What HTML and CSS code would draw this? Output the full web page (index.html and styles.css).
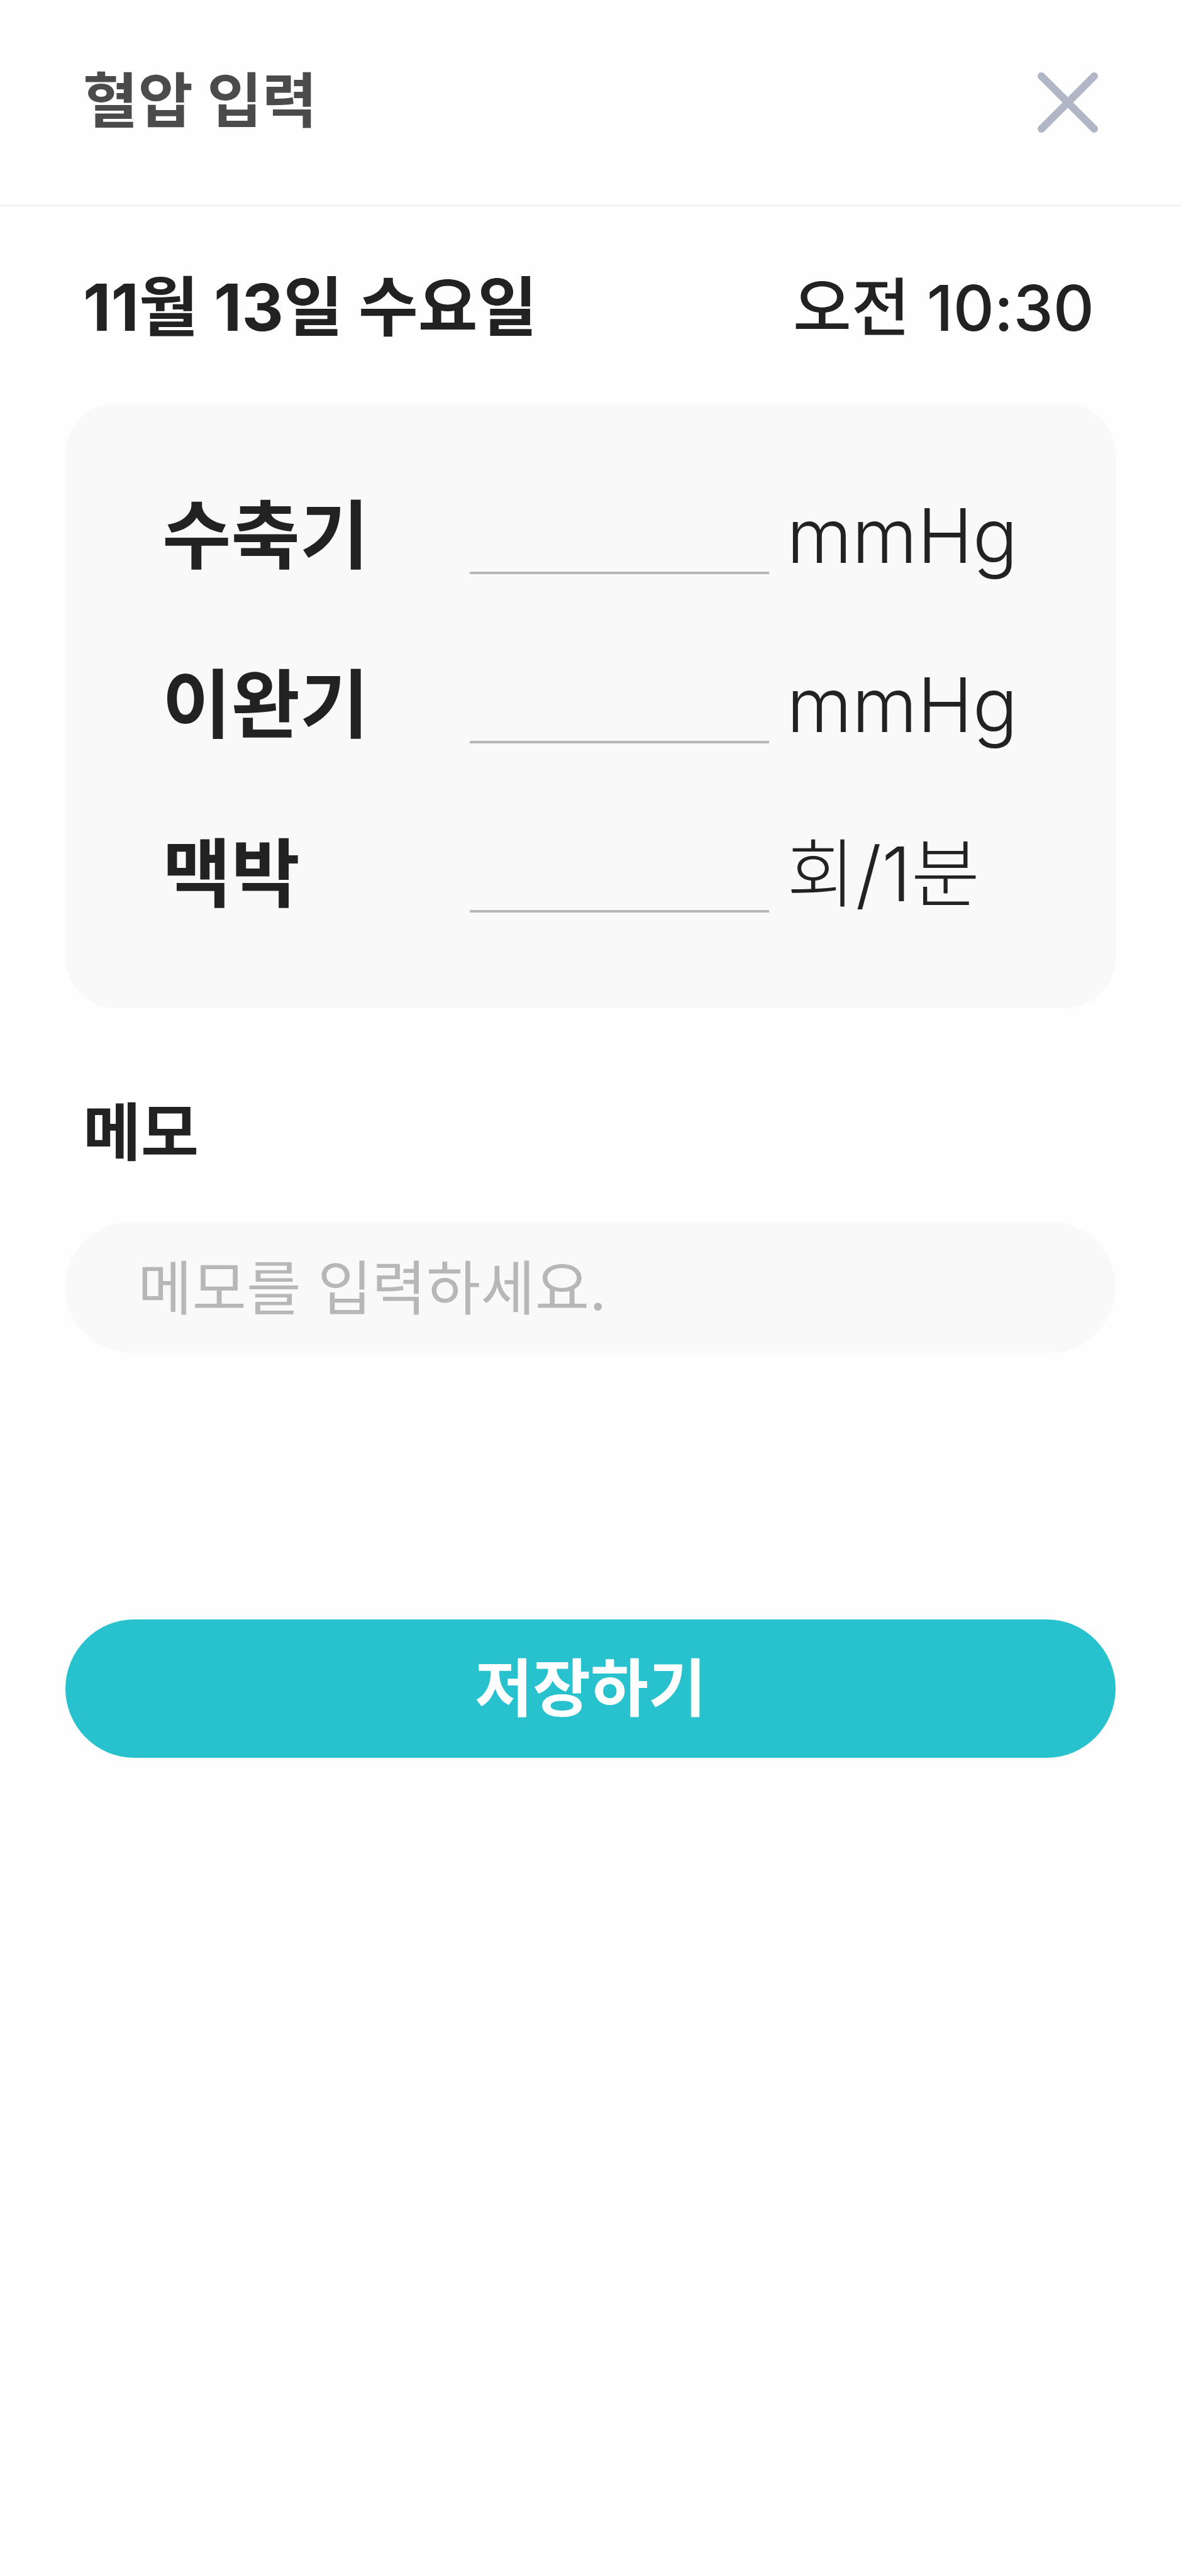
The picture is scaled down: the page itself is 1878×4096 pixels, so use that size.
FILE: index.html
```html
<!DOCTYPE html>
<html lang="ko">
<head>
  <meta charset="utf-8">
  <meta name="viewport" content="width=device-width, initial-scale=1">
  <title>혈압 입력</title>
  <link rel="stylesheet" href="styles.css">
</head>
<body>
  <header class="header">
    <h1 class="title">혈압 입력</h1>
    <button class="close" type="button" aria-label="닫기">
      <svg class="close-icon" viewBox="0 0 96 96" aria-hidden="true">
        <path d="M6 6 90 90M90 6 6 90" fill="none" stroke="currentColor" stroke-width="12" stroke-linecap="round"/>
      </svg>
    </button>
  </header>
  <main class="content">
    <div class="when">
      <h2 class="date">11월 13일 수요일</h2>
      <time class="time" datetime="10:30">오전 10:30</time>
    </div>
    <form class="form">
      <div class="card">
        <label class="label" for="systolic">수축기</label>
        <input class="value" id="systolic" type="text" inputmode="numeric">
        <span class="unit">mmHg</span>
        <label class="label" for="diastolic">이완기</label>
        <input class="value" id="diastolic" type="text" inputmode="numeric">
        <span class="unit">mmHg</span>
        <label class="label" for="pulse">맥박</label>
        <input class="value" id="pulse" type="text" inputmode="numeric">
        <span class="unit">회/1분</span>
      </div>
      <label class="memo-label" for="memo">메모</label>
      <input class="memo" id="memo" type="text" placeholder="메모를 입력하세요.">
      <button class="save" type="submit">저장하기</button>
    </form>
  </main>
</body>
</html>
```
FILE: styles.css
```css
* {
  box-sizing: border-box;
}

body {
  margin: 0;
  background: #fefefe;
  color: #222;
  font-family: Inter, "Noto Sans CJK KR", sans-serif;
}

input,
button {
  margin: 0;
  border: 0;
  border-radius: 0;
  font-family: inherit;
  color: inherit;
}

.header {
  display: flex;
  align-items: center;
  justify-content: space-between;
  height: 328px;
  padding: 0 132px;
  border-bottom: 2px solid #efeff2;
}

.title {
  margin: 0;
  padding-bottom: 4px;
  color: #4b4b4b;
  font-size: 95px;
  font-weight: 700;
  line-height: 120px;
}

.close {
  display: flex;
  padding: 0;
  background: none;
  color: #b0b6c5;
}

.close-icon {
  width: 96px;
  height: 96px;
}

.content {
  padding: 0 104px;
}

.when {
  display: flex;
  align-items: center;
  justify-content: space-between;
  height: 314px;
  padding: 8px 34px 0 28px;
}

.date {
  margin: 0;
  font-size: 103px;
  font-weight: 700;
  line-height: 120px;
}

.time {
  font-size: 101px;
  font-weight: 500;
  line-height: 120px;
}

.form {
  display: flex;
  flex-direction: column;
}

.card {
  display: grid;
  grid-template-columns: 489px minmax(0, 1fr) 397px;
  grid-auto-rows: 126px;
  row-gap: 143px;
  align-items: center;
  padding: 145px 154px 152px;
  border-radius: 80px;
  background: #f9f9f9;
}

.label {
  padding-top: 4px;
  font-size: 119px;
  font-weight: 700;
  line-height: 126px;
}

.value {
  width: 100%;
  height: 126px;
  padding: 0;
  border-bottom: 4px solid #b7b7b7;
  background: none;
  font-size: 119px;
  text-align: center;
}

.unit {
  padding: 4px 0 0 28px;
  font-size: 119px;
  font-weight: 300;
  line-height: 126px;
}

.memo-label {
  padding: 138px 28px 82px;
  font-size: 100px;
  font-weight: 700;
  line-height: 120px;
}

.memo {
  height: 208px;
  padding: 4px 115px 0;
  border-radius: 104px;
  background: #f9f9f9;
  font-size: 94px;
}

.memo::placeholder {
  color: #b7b7b7;
  opacity: 1;
}

.save {
  height: 220px;
  margin-top: 424px;
  border-radius: 110px;
  background: #28c2cf;
  color: #fff;
  font-size: 100px;
  font-weight: 700;
  line-height: 120px;
}
```
